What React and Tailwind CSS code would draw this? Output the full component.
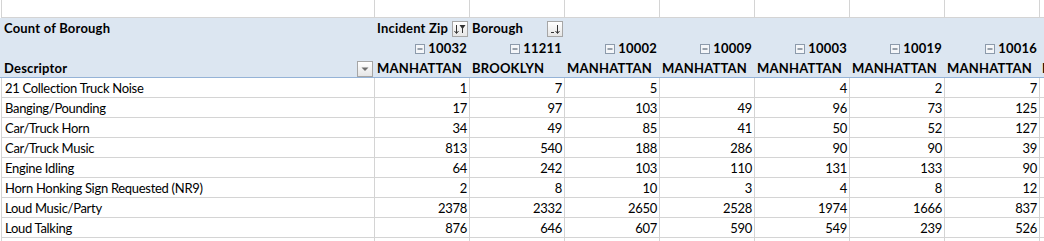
import React from "react";

const zips = ["10032", "11211", "10002", "10009", "10003", "10019", "10016", ""];
const boroughs = ["MANHATTAN", "BROOKLYN", "MANHATTAN", "MANHATTAN", "MANHATTAN", "MANHATTAN", "MANHATTAN", "MANHATTAN"];

const rows = [
  ["21 Collection Truck Noise", 1, 7, 5, "", 4, 2, 7],
  ["Banging/Pounding", 17, 97, 103, 49, 96, 73, 125],
  ["Car/Truck Horn", 34, 49, 85, 41, 50, 52, 127],
  ["Car/Truck Music", 813, 540, 188, 286, 90, 90, 39],
  ["Engine Idling", 64, 242, 103, 110, 131, 133, 90],
  ["Horn Honking Sign Requested (NR9)", 2, 8, 10, 3, 4, 8, 12],
  ["Loud Music/Party", 2378, 2332, 2650, 2528, 1974, 1666, 837],
  ["Loud Talking", 876, 646, 607, 590, 549, 239, 526],
];

function MinusBox() {
  return (
    <svg width="10" height="10" viewBox="0 0 10 10" className="mr-[3px] shrink-0">
      <rect x="0.5" y="0.5" width="9" height="9" fill="#f4f6f9" stroke="#8c9aab" />
      <line x1="2.5" y1="5" x2="7.5" y2="5" stroke="#3a4a5c" strokeWidth="1" />
    </svg>
  );
}

function FilterBtn({ kind }) {
  return (
    <div className="w-[16px] h-[16px] border border-[#a6a6a6] bg-gradient-to-b from-[#ffffff] to-[#e6e6e6] flex items-center justify-center shrink-0">
      {kind === "zip" && (
        <svg width="14" height="14" viewBox="0 0 14 14">
          <line x1="3.5" y1="3" x2="3.5" y2="11" stroke="#333" />
          <path d="M1.5 9 L3.5 11.5 L5.5 9" fill="none" stroke="#333" />
          <path d="M6.5 3 L12.5 3 L10 6.5 L10 11 L9 11 L9 6.5 Z" fill="#333" />
        </svg>
      )}
      {kind === "borough" && (
        <svg width="14" height="14" viewBox="0 0 14 14">
          <line x1="3" y1="10.5" x2="6" y2="10.5" stroke="#333" />
          <line x1="9.5" y1="3" x2="9.5" y2="11" stroke="#333" />
          <path d="M7.5 9 L9.5 11.5 L11.5 9" fill="none" stroke="#333" />
        </svg>
      )}
      {kind === "drop" && (
        <svg width="14" height="14" viewBox="0 0 14 14">
          <path d="M3.5 5.5 L10.5 5.5 L7 9 Z" fill="#6d6d6d" />
        </svg>
      )}
    </div>
  );
}

const cell = "w-[95px] shrink-0 border-r border-[#d4d4d4] h-full";

export default function App() {
  return (
    <div
      className="w-[1044px] h-[241px] overflow-hidden bg-white text-[13px] text-black"
      style={{ fontFamily: "Lato, 'Open Sans', sans-serif" }}
    >
      <div className="w-[1150px]">
        {/* blank top row */}
        <div className="flex h-[18px] border-b border-[#d4d4d4] ml-[1px] border-l">
          <div className="w-[373px] shrink-0 border-r border-[#d4d4d4]" />
          {zips.map((z, i) => (
            <div key={i} className={cell} />
          ))}
        </div>

        {/* pivot header */}
        <div className="bg-[#dce6f1] font-bold border-b border-[#95b3d7] tracking-[0.2px]">
          <div className="flex h-[20px] items-center pt-[2px]">
            <div className="w-[374px] shrink-0 pl-[4px]">Count of Borough</div>
            <div className="w-[95px] shrink-0 flex items-center justify-between pl-[3px] pr-[1px]">
              <span className="whitespace-nowrap">Incident Zip</span>
              <FilterBtn kind="zip" />
            </div>
            <div className="w-[95px] shrink-0 flex items-center justify-between pl-[3px] pr-[1px]">
              <span>Borough</span>
              <FilterBtn kind="borough" />
            </div>
          </div>
          <div className="flex h-[20px] items-center pt-[2px]">
            <div className="w-[374px] shrink-0" />
            {zips.map((z, i) => (
              <div key={i} className="w-[95px] shrink-0 flex items-center justify-end pr-[2px]">
                {z && <MinusBox />}
                <span>{z}</span>
              </div>
            ))}
          </div>
          <div className="flex h-[19px] items-center pt-[2px]">
            <div className="w-[374px] shrink-0 flex items-center justify-between pl-[4px] pr-[1px]">
              <span>Descriptor</span>
              <FilterBtn kind="drop" />
            </div>
            {boroughs.map((b, i) => (
              <div key={i} className="w-[95px] shrink-0 pl-[3px] whitespace-nowrap overflow-hidden">
                {b}
              </div>
            ))}
          </div>
        </div>

        {/* data rows */}
        {rows.map((r) => (
          <div key={r[0]} className="flex h-[20px] border-b border-[#d4d4d4] ml-[1px] border-l tracking-[-0.3px]">
            <div className="w-[373px] shrink-0 border-r border-[#d4d4d4] pl-[3px] pt-[2px] flex items-center">
              {r[0]}
            </div>
            {r.slice(1).map((v, i) => (
              <div key={i} className={`${cell} flex items-center justify-end pr-[2px] pt-[2px]`}>
                {v}
              </div>
            ))}
            <div className={cell} />
          </div>
        ))}

        {/* partial row */}
        <div className="flex h-[20px] ml-[1px] border-l border-[#d4d4d4]">
          <div className="w-[373px] shrink-0 border-r border-[#d4d4d4]" />
          {zips.map((z, i) => (
            <div key={i} className={cell} />
          ))}
        </div>
      </div>
    </div>
  );
}
